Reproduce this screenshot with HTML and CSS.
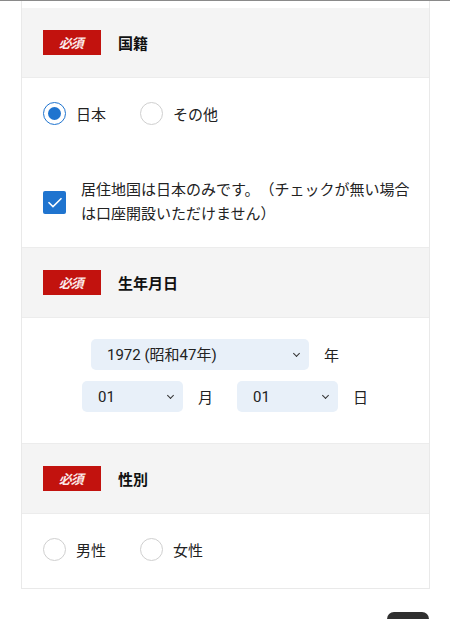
FILE: index.html
```html
<!DOCTYPE html>
<html>
<head>
    <title>口座開設 お客様情報</title>
    <link rel="stylesheet" href="styles.css">
</head>
<body>
    <div class="topline"></div>

    <div class="card">
        <div class="gap"></div>

        <div class="head">
            <span class="badge"><i>必須</i></span>
            <span class="title">国籍</span>
        </div>
        <div class="body nationality">
            <div class="radios">
                <label class="radio"><span class="circle on"></span>日本</label>
                <label class="radio"><span class="circle"></span>その他</label>
            </div>
            <label class="check">
                <span class="box">
                    <svg width="16" height="11" viewBox="0 0 16 11"><path d="M1.5 5.2 L6 9.6 L14.5 1.2" fill="none" stroke="#fff" stroke-width="1.5"/></svg>
                </span>
                <span class="check-text">居住地国は日本のみです。（チェックが無い場合は口座開設いただけません）</span>
            </label>
        </div>

        <div class="head">
            <span class="badge"><i>必須</i></span>
            <span class="title">生年月日</span>
        </div>
        <div class="body birth">
            <div class="row year-row">
                <span class="select year"><select><option>1972 (昭和47年)</option></select></span>
                <span class="unit">年</span>
            </div>
            <div class="row">
                <span class="select small"><select><option>01</option></select></span>
                <span class="unit">月</span>
                <span class="select small"><select><option>01</option></select></span>
                <span class="unit">日</span>
            </div>
        </div>

        <div class="head">
            <span class="badge"><i>必須</i></span>
            <span class="title">性別</span>
        </div>
        <div class="body gender">
            <div class="radios">
                <label class="radio"><span class="circle"></span>男性</label>
                <label class="radio"><span class="circle"></span>女性</label>
            </div>
        </div>
    </div>

    <div class="footer">
        <span class="tab"></span>
    </div>
</body>
</html>
```

FILE: styles.css
```css
body {
    font-family: Roboto, "Noto Sans CJK JP", sans-serif;
    background-color: #fff;
    color: #222;
    margin: 0;
    padding: 0;
    font-size: 15px;
}

.topline {
    height: 1px;
    background-color: #8a8a8a;
}

.card {
    margin: 0 20px 0 21px;
    border: 1px solid #e9e9e9;
    border-top: none;
}

.gap {
    height: 7px;
}

.head {
    display: flex;
    align-items: center;
    height: 69px;
    padding-left: 21px;
    background-color: #f4f4f4;
    border-bottom: 1px solid #ececec;
}

.badge {
    display: inline-flex;
    align-items: center;
    justify-content: center;
    width: 58px;
    height: 25px;
    background-color: #c2120e;
    color: #fff;
    font-family: "Noto Sans CJK JP", sans-serif;
    font-weight: bold;
    font-size: 13px;
    margin-right: 17px;
}

.badge i {
    display: inline-block;
    transform: skewX(-14deg);
    font-style: normal;
    letter-spacing: -1px;
    color: #fbe9e9;
}

.title {
    font-family: "Noto Sans CJK JP", sans-serif;
    font-weight: bold;
    font-size: 15px;
    color: #111;
}

.body {
    border-bottom: 1px solid #ececec;
}

.body:last-child {
    border-bottom: none;
}

.nationality {
    height: 169px;
    padding-left: 21px;
}

.radios {
    display: flex;
    align-items: center;
    padding-top: 24px;
}

.gender {
    height: 74px;
    padding-left: 21px;
}

.radio {
    display: flex;
    align-items: center;
    width: 97px;
    font-family: "Noto Sans CJK JP", sans-serif;
    font-size: 15px;
    color: #222;
}

.circle {
    box-sizing: border-box;
    width: 23px;
    height: 23px;
    border: 1px solid #cfcfcf;
    border-radius: 50%;
    margin-right: 10px;
    display: flex;
    align-items: center;
    justify-content: center;
}

.circle.on {
    border-color: #1f74cf;
}

.circle.on::after {
    content: "";
    width: 13px;
    height: 13px;
    border-radius: 50%;
    background-color: #1f74cf;
}

.check {
    display: flex;
    align-items: center;
    margin-top: 52px;
}

.box {
    flex: none;
    width: 23px;
    height: 23px;
    border-radius: 2px;
    background-color: #1f74cf;
    display: flex;
    align-items: center;
    justify-content: center;
    margin-right: 15px;
    margin-top: 3px;
}

.check-text {
    font-family: "Noto Sans CJK JP", sans-serif;
    font-size: 15px;
    line-height: 24px;
    color: #222;
    width: 336px;
    text-spacing-trim: space-all;
}

.birth {
    box-sizing: border-box;
    height: 126px;
    padding-top: 21px;
}

.row {
    display: flex;
    align-items: center;
    padding-left: 60px;
    margin-bottom: 11px;
}

.year-row {
    padding-left: 69px;
}

.select {
    position: relative;
    display: inline-block;
}

.select select {
    appearance: none;
    -webkit-appearance: none;
    border: none;
    border-radius: 5px;
    background-color: #e8f0f9;
    font-family: Roboto, "Noto Sans CJK JP", sans-serif;
    font-size: 15px;
    color: #222;
    height: 31px;
    padding: 0 0 0 16px;
    outline: none;
}

.select::after {
    content: "";
    position: absolute;
    width: 4px;
    height: 4px;
    border-right: 1.3px solid #333;
    border-bottom: 1.3px solid #333;
    transform: rotate(45deg);
    top: 12px;
    right: 10px;
}

.year select {
    width: 218px;
}

.small select {
    width: 101px;
}

.unit {
    font-family: "Noto Sans CJK JP", sans-serif;
    font-size: 15px;
    margin-left: 15px;
    margin-right: 24px;
}

.footer {
    display: flex;
    justify-content: flex-end;
    margin: 23px 21px 0 0;
}

.tab {
    width: 42px;
    height: 12px;
    background-color: #2f2f2f;
    border-radius: 7px 7px 0 0;
}
```
